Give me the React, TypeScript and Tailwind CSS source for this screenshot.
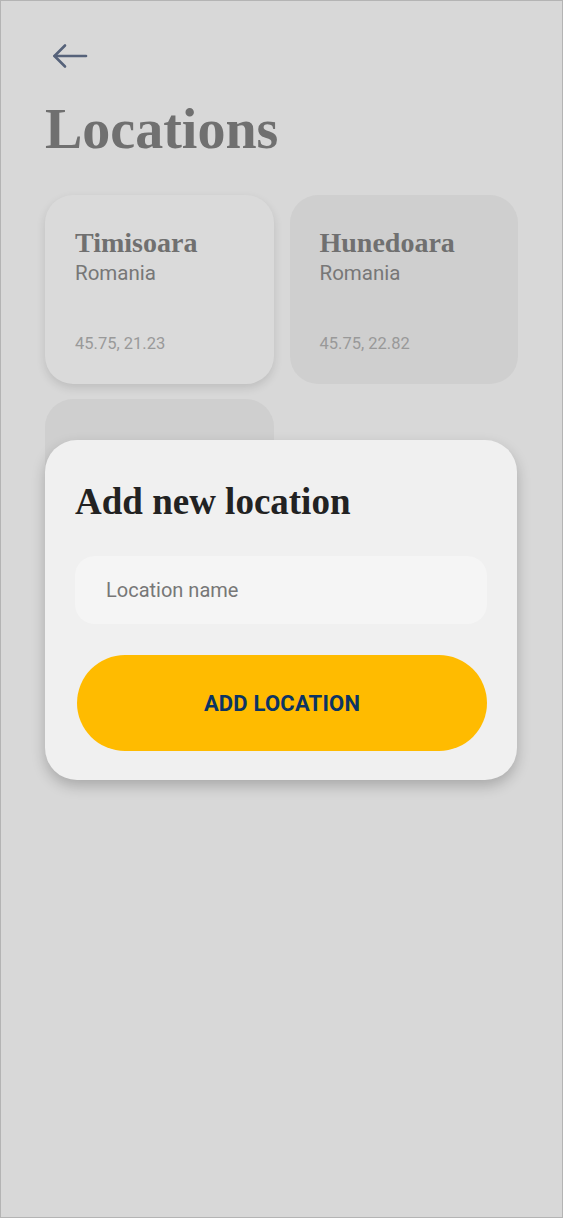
const serif = "font-['Liberation_Serif',serif]";
const sans = "font-['Roboto',sans-serif]";

const locations = [
  { city: "Timisoara", country: "Romania", coords: "45.75, 21.23", raised: true },
  { city: "Hunedoara", country: "Romania", coords: "45.75, 22.82", raised: false },
];

function BackArrow() {
  return (
    <svg width="36" height="26" viewBox="0 0 36 26" fill="none" stroke="#56627a" strokeWidth="2.6" strokeLinecap="round" strokeLinejoin="round">
      <path d="M34 13H2.5" />
      <path d="M13 2.5L2.5 13L13 23.5" />
    </svg>
  );
}

export default function App() {
  return (
    <div className="relative h-[1218px] w-[563px] overflow-hidden border border-[#b4b4b4] bg-[#d8d8d8]">
      <div className="px-[44px] pt-[42px]">
        <button className="ml-[7px] flex h-[26px] w-[36px] items-center">
          <BackArrow />
        </button>
        <h1 className={`${serif} mt-[30px] text-[56px] font-bold leading-[60px] text-[#707070]`}>
          Locations
        </h1>
        <div className="mt-[36px] grid grid-cols-2 gap-x-[16px] gap-y-[15px]">
          {locations.map((l) => (
            <div
              key={l.city}
              className={`flex h-[189px] flex-col rounded-[28px] px-[30px] pt-[31px] pb-[27px] ${
                l.raised ? "bg-[#dadada] shadow-[0_4px_10px_rgba(0,0,0,0.12)]" : "bg-[#cfcfcf]"
              }`}
            >
              <div className={`${serif} text-[28px] font-bold leading-[34px] text-[#707070]`}>{l.city}</div>
              <div className={`${sans} text-[20.5px] leading-[26px] text-[#777]`}>{l.country}</div>
              <div className={`${sans} mt-auto text-[16.5px] text-[#999]`}>{l.coords}</div>
            </div>
          ))}
          <div className="h-[189px] rounded-[28px] bg-[#cfcfcf]" />
        </div>
      </div>

      <div className="absolute top-[439px] left-[44px] w-[472px] rounded-[32px] bg-[#f0f0f0] px-[30px] pt-[40px] pb-[29px] shadow-[0_6px_14px_rgba(0,0,0,0.22)]">
        <h2 className={`${serif} text-[37px] font-bold leading-[44px] text-[#222]`}>Add new location</h2>
        <input
          placeholder="Location name"
          className={`${sans} mt-[32px] h-[68px] w-full rounded-[20px] bg-[#f5f5f5] px-[31px] text-[20px] text-[#333] outline-none placeholder:text-[#777]`}
        />
        <button
          className={`${sans} mt-[31px] ml-[2px] flex h-[96px] w-[410px] items-center justify-center rounded-full bg-[#ffbb00] text-[22px] font-bold tracking-[0.2px] text-[#0c3463]`}
        >
          ADD LOCATION
        </button>
      </div>
    </div>
  );
}
